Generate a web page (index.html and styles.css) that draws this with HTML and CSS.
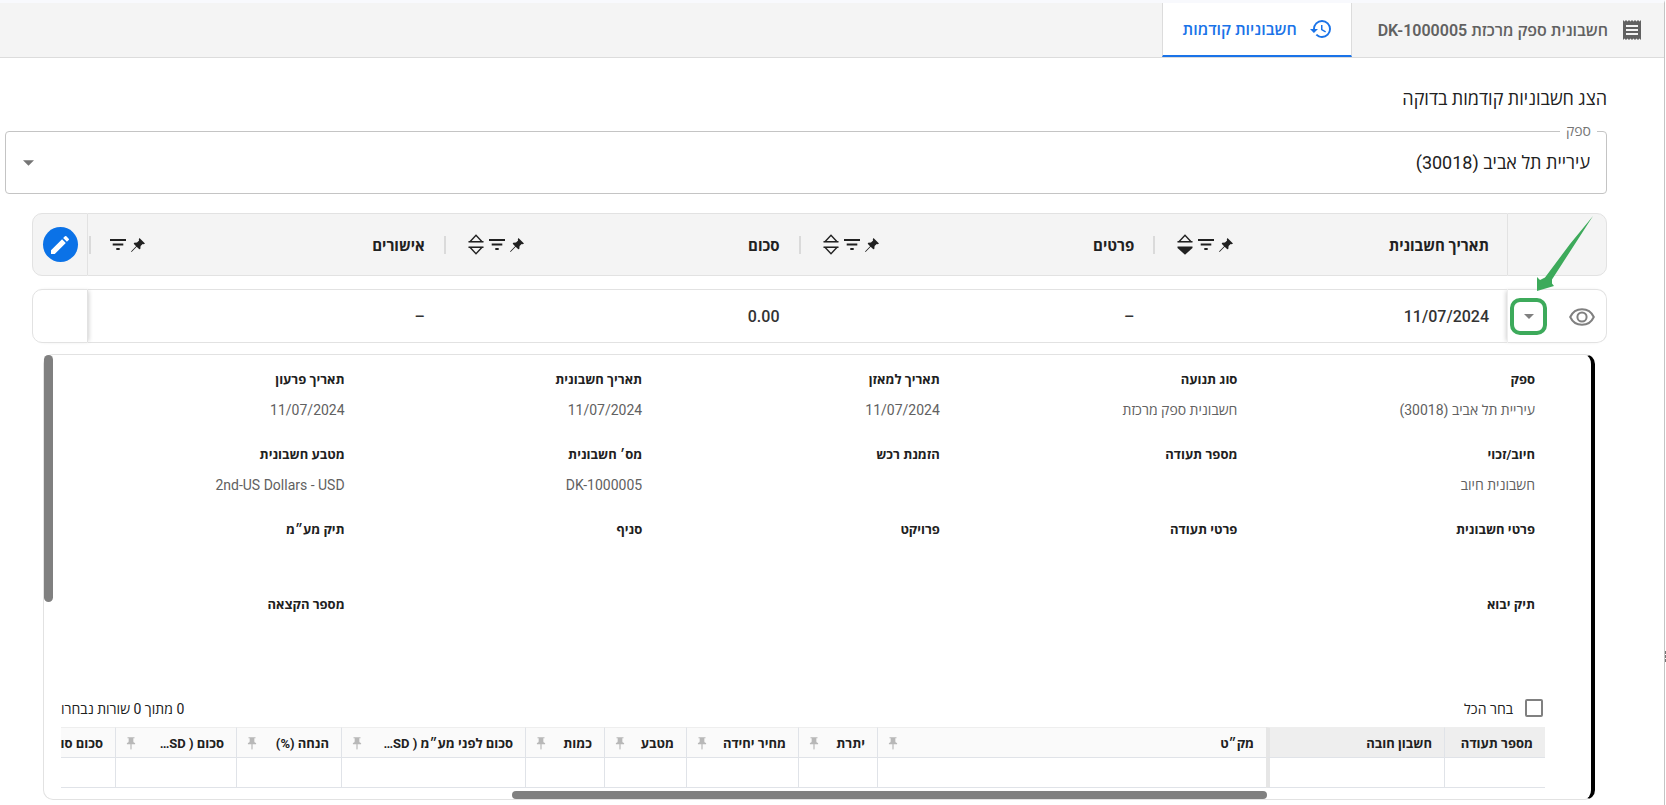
FILE: index.html
```html
<!DOCTYPE html>
<html lang="he" dir="rtl">
  <head>
    <meta charset="UTF-8">
    <title>חשבוניות קודמות</title>
    <link rel="stylesheet" href="styles.css">
  </head>
  <body>
    <svg class="sprite" aria-hidden="true">
      <symbol id="pin" viewBox="0 0 24 24">
        <path d="M16 9V4h2V2H6v2h2v5c0 1.700-1.300 3-3 3v2h6v8l1 2 1-2v-8h6v-2c-1.700 0-3-1.300-3-3z" />
      </symbol>
      <symbol id="pin-dark" viewBox="0 0 14 14">
        <path d="M8.500 0L14 5.500L12.700 6.200L11.700 6L9.600 8.100L9.300 11L8.300 11.300L5.700 8.800L0.600 14L0 13.400L5.100 8.200L2.700 5.700L3.200 4.800L6 4.500L8.100 2.400L7.800 1.200Z" />
      </symbol>
      <symbol id="filter" viewBox="0 0 16 11">
        <path d="M0 0h16v2H0zM2.700 4.500h10.600v2H2.700zM6.300 9h3.400v2H6.300z" />
      </symbol>
      <symbol id="sort-up" viewBox="0 0 16 21">
        <path d="M8 1.200L14 7.700H2z" fill="none" stroke="currentColor" stroke-width="1.300" />
        <path d="M0.500 7h15v1.400h-15z" />
      </symbol>
      <symbol id="sort-down" viewBox="0 0 16 21">
        <path d="M8 19.800L14 13.300H2z" fill="none" stroke="currentColor" stroke-width="1.300" />
        <path d="M0.500 12.600h15V14h-15z" />
      </symbol>
      <symbol id="sort-down-on" viewBox="0 0 16 21">
        <path d="M0.500 12.600h15V14L8 20.700L0.500 14z" />
      </symbol>
      <symbol id="caret" viewBox="0 0 10 5">
        <path d="M0 0h10L5 5z" />
      </symbol>
    </svg>

    <div class="app">
      <nav class="tabs">
        <button class="tab">
          <svg class="tab-icon" viewBox="0 0 24 24">
            <path d="M18 17H6v-2h12v2zm0-4H6v-2h12v2zm0-4H6V7h12v2zM3 22l1.500-1.500L6 22l1.500-1.500L9 22l1.500-1.500L12 22l1.500-1.500L15 22l1.500-1.500L18 22l1.500-1.500L21 22V2l-1.500 1.500L18 2l-1.500 1.500L15 2l-1.500 1.500L12 2l-1.500 1.500L9 2 7.500 3.500 6 2 4.500 3.500 3 2v20z" />
          </svg>
          <span>חשבונית ספק מרכזת DK-1000005</span>
        </button>
        <button class="tab active">
          <svg class="tab-icon" viewBox="0 0 24 24">
            <path d="M13 3a9 9 0 0 0-9 9H1l3.890 3.890.07.14L9 12H6c0-3.870 3.130-7 7-7s7 3.130 7 7-3.130 7-7 7c-1.930 0-3.680-.79-4.940-2.060l-1.420 1.420A8.950 8.950 0 0 0 13 21a9 9 0 0 0 0-18zm-1 5v5l4.280 2.540.72-1.210-3.500-2.080V8H12z" />
          </svg>
          <span>חשבוניות קודמות</span>
        </button>
      </nav>

      <main class="content">
        <h1 class="page-title">הצג חשבוניות קודמות בדוקה</h1>

        <div class="field">
          <label class="field-label" for="supplier">ספק</label>
          <select class="field-select" id="supplier">
            <option>עיריית תל אביב (30018)</option>
          </select>
          <svg class="field-caret"><use href="#caret" /></svg>
        </div>

        <div class="list">
          <table class="invoices">
            <colgroup>
              <col class="col-actions">
              <col>
              <col>
              <col>
              <col>
              <col class="col-edit">
            </colgroup>
            <thead>
              <tr>
                <th></th>
                <th>
                  <div class="head">
                    <span>תאריך חשבונית</span>
                    <span class="tools">
                      <svg class="i-pin"><use href="#pin-dark" /></svg>
                      <svg class="i-filter"><use href="#filter" /></svg>
                      <svg class="i-sort"><use href="#sort-up" /><use href="#sort-down-on" /></svg>
                    </span>
                  </div>
                </th>
                <th>
                  <div class="head">
                    <span>פרטים</span>
                    <span class="tools">
                      <svg class="i-pin"><use href="#pin-dark" /></svg>
                      <svg class="i-filter"><use href="#filter" /></svg>
                      <svg class="i-sort"><use href="#sort-up" /><use href="#sort-down" /></svg>
                    </span>
                  </div>
                </th>
                <th>
                  <div class="head">
                    <span>סכום</span>
                    <span class="tools">
                      <svg class="i-pin"><use href="#pin-dark" /></svg>
                      <svg class="i-filter"><use href="#filter" /></svg>
                      <svg class="i-sort"><use href="#sort-up" /><use href="#sort-down" /></svg>
                    </span>
                  </div>
                </th>
                <th>
                  <div class="head">
                    <span>אישורים</span>
                    <span class="tools">
                      <svg class="i-pin"><use href="#pin-dark" /></svg>
                      <svg class="i-filter"><use href="#filter" /></svg>
                    </span>
                  </div>
                </th>
                <th>
                  <button class="edit-btn" aria-label="עריכה">
                    <svg viewBox="0 0 24 24">
                      <path d="M3 17.250V21h3.750L17.810 9.940l-3.750-3.750L3 17.250zM20.710 7.040a1 1 0 0 0 0-1.410l-2.340-2.340a1 1 0 0 0-1.410 0l-1.830 1.830 3.750 3.750 1.830-1.830z" />
                    </svg>
                  </button>
                </th>
              </tr>
            </thead>
            <tbody>
              <tr>
                <td>
                  <div class="actions">
                    <button class="icon-btn" aria-label="הצג">
                      <svg class="i-eye" viewBox="0 0 26 18">
                        <path d="M1.200 9C3.500 4 8 1.200 13 1.200S22.500 4 24.800 9C22.500 14 18 16.800 13 16.800S3.500 14 1.200 9z" />
                        <circle cx="13" cy="9" r="4.600" />
                      </svg>
                    </button>
                    <button class="icon-btn expand" aria-label="הרחב">
                      <svg class="i-caret"><use href="#caret" /></svg>
                    </button>
                  </div>
                </td>
                <td>11/07/2024</td>
                <td>–</td>
                <td>0.00</td>
                <td>–</td>
                <td></td>
              </tr>
            </tbody>
          </table>

          <svg class="arrow" viewBox="0 0 58 76">
            <path d="M57 0L16 63.500L16 67.500L18 70L1 75L1 61L4 64L9 61.500L34 28Z" />
          </svg>

          <section class="detail">
            <dl class="props">
              <div><dt>ספק</dt><dd>עיריית תל אביב (30018)</dd></div>
              <div><dt>סוג תנועה</dt><dd>חשבונית ספק מרכזת</dd></div>
              <div><dt>תאריך למאזן</dt><dd>11/07/2024</dd></div>
              <div><dt>תאריך חשבונית</dt><dd>11/07/2024</dd></div>
              <div><dt>תאריך פרעון</dt><dd>11/07/2024</dd></div>
              <div><dt>חיוב/זכוי</dt><dd>חשבונית חיוב</dd></div>
              <div><dt>מספר תעודה</dt><dd></dd></div>
              <div><dt>הזמנת רכש</dt><dd></dd></div>
              <div><dt>מס׳ חשבונית</dt><dd>DK-1000005</dd></div>
              <div><dt>מטבע חשבונית</dt><dd><bdi>2nd-US Dollars - USD</bdi></dd></div>
              <div><dt>פרטי חשבונית</dt><dd></dd></div>
              <div><dt>פרטי תעודה</dt><dd></dd></div>
              <div><dt>פרויקט</dt><dd></dd></div>
              <div><dt>סניף</dt><dd></dd></div>
              <div><dt>תיק מע״מ</dt><dd></dd></div>
              <div><dt>תיק יבוא</dt><dd></dd></div>
              <div class="last-col"><dt>מספר הקצאה</dt><dd></dd></div>
            </dl>

            <div class="lines">
              <div class="lines-bar">
                <label class="select-all">
                  <input type="checkbox">
                  <span>בחר הכל</span>
                </label>
                <span>0 מתוך 0 שורות נבחרו</span>
              </div>
              <table class="lines-table">
                <colgroup>
                  <col class="w-doc">
                  <col class="w-account">
                  <col>
                  <col class="w-small">
                  <col class="w-price">
                  <col class="w-currency">
                  <col class="w-small">
                  <col class="w-net">
                  <col class="w-discount">
                  <col class="w-sum">
                  <col class="w-cut">
                </colgroup>
                <thead>
                  <tr>
                    <th class="pinned">מספר תעודה</th>
                    <th class="pinned pinned-end">חשבון חובה</th>
                    <th><div class="head"><span>מק״ט</span><svg><use href="#pin" /></svg></div></th>
                    <th><div class="head"><span>יתרת</span><svg><use href="#pin" /></svg></div></th>
                    <th><div class="head"><span>מחיר יחידה</span><svg><use href="#pin" /></svg></div></th>
                    <th><div class="head"><span>מטבע</span><svg><use href="#pin" /></svg></div></th>
                    <th><div class="head"><span>כמות</span><svg><use href="#pin" /></svg></div></th>
                    <th><div class="head"><span>סכום לפני מע״מ ( SD…</span><svg><use href="#pin" /></svg></div></th>
                    <th><div class="head"><span>הנחה (%)</span><svg><use href="#pin" /></svg></div></th>
                    <th><div class="head"><span>סכום ( SD…</span><svg><use href="#pin" /></svg></div></th>
                    <th>סכום סו</th>
                  </tr>
                </thead>
                <tbody>
                  <tr>
                    <td></td>
                    <td class="pinned-end"></td>
                    <td></td>
                    <td></td>
                    <td></td>
                    <td></td>
                    <td></td>
                    <td></td>
                    <td></td>
                    <td></td>
                    <td></td>
                  </tr>
                </tbody>
              </table>
            </div>

            <div class="scroll-y"></div>
            <div class="scroll-x"></div>
          </section>
        </div>
      </main>
    </div>
  </body>
</html>
```
FILE: styles.css
```css
* {
  box-sizing: border-box;
}

body {
  margin: 0;
  background: #fff;
  color: #212121;
  font-family: Roboto, "Open Sans", "Liberation Sans", sans-serif;
  font-size: 16px;
}

button,
select,
input {
  font: inherit;
  color: inherit;
}

button {
  background: none;
  border: none;
  padding: 0;
}

svg {
  display: block;
  fill: currentColor;
  flex: none;
}

.sprite {
  display: none;
}

.app {
  position: relative;
  min-height: 100vh;
  margin-right: 1px;
  border-right: 1px solid #c4c4c4;
  border-top: 3px solid #f8f9fd;
}

/* splitter handle */
.app::after {
  content: "";
  position: absolute;
  top: 648px;
  right: -2px;
  height: 11px;
  border-right: 1px dashed #757575;
}

/* tabs */
.tabs {
  display: flex;
  height: 55px;
  background: #f4f4f4;
  border-bottom: 1px solid #dcdcdc;
}

.tab {
  display: flex;
  align-items: center;
  gap: 12px;
  padding: 0 20px 0 26px;
  color: #616161;
  font-weight: 600;
}

.tab.active {
  padding: 0 18px 0 20px;
  background: #fff;
  color: #1a73e8;
  border-left: 1px solid #dcdcdc;
  border-right: 1px solid #dcdcdc;
  border-bottom: 2px solid #1a73e8;
}

.tab-icon {
  width: 24px;
  height: 24px;
}

/* content */
.content {
  padding: 28px 57px 6px 5px;
}

.page-title {
  margin: 0 0 19px;
  font-size: 18px;
  font-weight: 400;
  line-height: 26px;
}

.field {
  position: relative;
  height: 63px;
}

.field-label {
  position: absolute;
  top: -9px;
  right: 10px;
  padding: 0 6px;
  background: #fff;
  color: #757575;
  font-size: 14px;
  line-height: 18px;
}

.field-select {
  width: 100%;
  height: 100%;
  padding: 0 16px;
  appearance: none;
  background: #fff;
  border: 1px solid #c4c4c4;
  border-radius: 4px;
  font-size: 18px;
}

.field-caret {
  position: absolute;
  top: 29px;
  left: 18px;
  width: 11px;
  height: 6px;
  color: #757575;
}

/* invoices table */
.list {
  position: relative;
  padding-left: 27px;
  margin-top: 6px;
}

.invoices {
  width: 100%;
  table-layout: fixed;
  border-collapse: separate;
  border-spacing: 0 13px;
}

.col-actions {
  width: 100px;
}

.col-edit {
  width: 56px;
}

.invoices th,
.invoices td {
  padding: 0 18px;
  border: solid #e2e2e2;
  border-width: 1px 0;
  text-align: right;
  font-weight: 500;
}

.invoices th {
  position: relative;
  height: 63px;
  background: #f4f4f4;
  font-size: 15px;
  font-weight: 700;
}

.invoices td {
  height: 54px;
  color: #333;
}

.invoices tr > :first-child {
  padding: 0;
  border-width: 1px;
  border-radius: 0 10px 10px 0;
}

.invoices tr > :last-child {
  padding: 0;
  border-width: 1px;
  border-radius: 10px 0 0 10px;
}

.invoices td:first-child {
  border-left-color: #eee;
  box-shadow: -3px 0 4px -2px #d0d0d0;
}

.invoices td:last-child {
  box-shadow: 3px 0 4px -2px #d0d0d0;
}

.head {
  display: flex;
  align-items: center;
  justify-content: space-between;
}

.invoices th .head::after {
  content: "";
  position: absolute;
  left: 1px;
  top: 22px;
  width: 2px;
  height: 18px;
  background: #dadada;
}

.tools {
  display: flex;
  align-items: center;
  gap: 5px;
  padding-left: 4px;
}

.i-pin {
  width: 14px;
  height: 14px;
}

.i-filter {
  width: 16px;
  height: 11px;
}

.i-sort {
  width: 16px;
  height: 21px;
  margin-left: 3px;
}

.edit-btn {
  display: flex;
  align-items: center;
  justify-content: center;
  width: 35px;
  height: 35px;
  margin: 0 auto;
  border-radius: 50%;
  background: #0b72e7;
  color: #fff;
}

.edit-btn svg {
  width: 24px;
  height: 24px;
}

.actions {
  display: flex;
  align-items: center;
  justify-content: space-between;
  padding: 1px 11px 0 2px;
}

.icon-btn {
  color: #808080;
}

.i-eye {
  width: 26px;
  height: 18px;
  fill: none;
  stroke: currentColor;
  stroke-width: 2;
}

.i-caret {
  width: 10px;
  height: 5px;
}

.expand {
  display: flex;
  align-items: center;
  justify-content: center;
  width: 37px;
  height: 37px;
  border: 4px solid #3daa5b;
  border-radius: 10px;
}

.arrow {
  position: absolute;
  top: 16px;
  right: 13px;
  width: 58px;
  height: 76px;
  color: #3daa5b;
}

/* detail panel */
.detail {
  position: relative;
  margin: -2px 12px 0 11px;
  padding: 15px 46px 11px 17px;
  border: 1px solid #e2e2e2;
  border-right: 4px solid #000;
  border-radius: 10px;
}

.props {
  display: grid;
  grid-template-columns: repeat(5, 1fr);
  margin: 0 10px 0 -14px;
  font-size: 14px;
  line-height: 20px;
}

.props > div {
  height: 75px;
}

.props dt {
  font-size: 13px;
  font-weight: 700;
}

.props dd {
  margin: 10px 0 0;
  color: #616161;
}

.last-col {
  grid-column: 5;
}

.lines {
  margin-top: 26px;
  overflow: hidden;
}

.lines-bar {
  display: flex;
  align-items: center;
  justify-content: space-between;
  height: 24px;
  margin-bottom: 7px;
  font-size: 14px;
  white-space: nowrap;
}

.select-all {
  display: flex;
  align-items: center;
  gap: 12px;
}

.select-all input {
  width: 18px;
  height: 18px;
  margin: 0 2px 0 0;
  appearance: none;
  border: 2px solid #808080;
  border-radius: 2px;
}

.lines-table {
  width: 100%;
  table-layout: fixed;
  border-collapse: separate;
  border-spacing: 0;
  font-size: 13px;
}

.w-doc {
  width: 101px;
}

.w-account {
  width: 178px;
}

.w-small {
  width: 79px;
}

.w-currency {
  width: 82px;
}

.w-price {
  width: 112px;
}

.w-net {
  width: 184px;
}

.w-discount {
  width: 105px;
}

.w-sum {
  width: 121px;
}

.w-cut {
  width: 54px;
}

.lines-table th,
.lines-table td {
  border-bottom: 1px solid #e0e3e8;
  border-left: 1px solid #e0e3e8;
}

.lines-table th {
  height: 31px;
  padding: 0 12px 0 10px;
  border-top: 1px solid #eee;
  background: #fafafa;
  text-align: right;
  font-weight: 700;
  white-space: nowrap;
}

.lines-table th:last-child {
  padding-left: 0;
  overflow: hidden;
}

.lines-table tr > :last-child {
  border-left: none;
}

.lines-table td {
  height: 30px;
  padding: 0;
}

.lines-table .pinned {
  background: #eee;
}

.lines-table .pinned-end {
  border-left: 4px solid #e6e6e6;
}

.lines-table svg {
  width: 14px;
  height: 14px;
  margin-left: -2px;
  color: #b8b8b8;
}

.scroll-y {
  position: absolute;
  top: 0;
  left: 0;
  width: 9px;
  height: 247px;
  border-radius: 5px;
  background: #808080;
}

.scroll-x {
  position: absolute;
  right: 324px;
  bottom: 0;
  left: 468px;
  height: 8px;
  border-radius: 4px;
  background: #808080;
}
```
